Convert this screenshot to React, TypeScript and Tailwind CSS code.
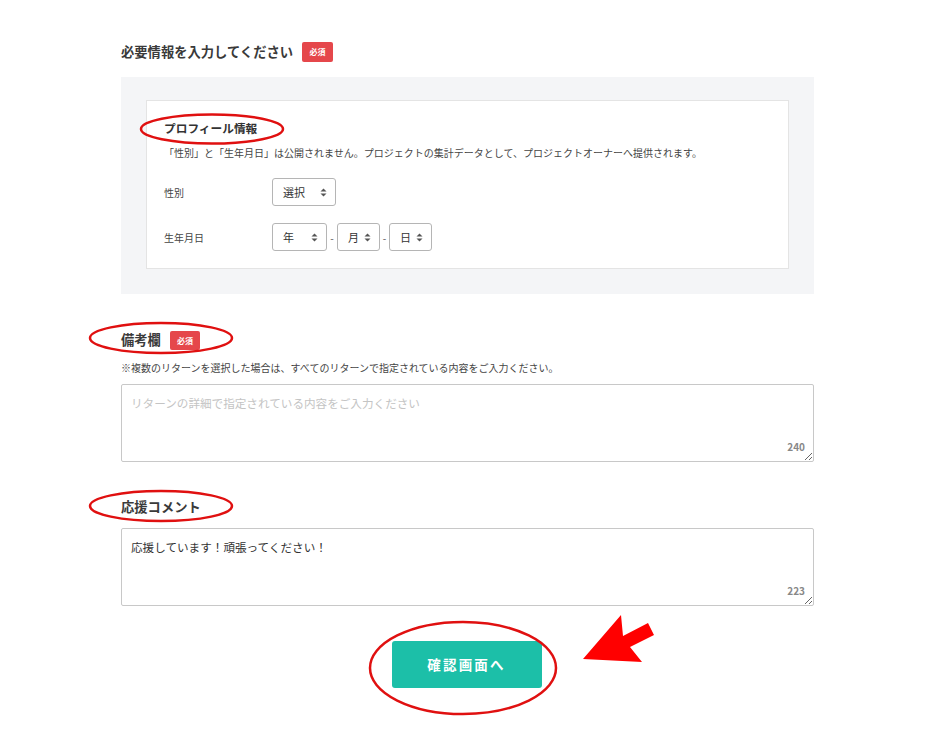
import { ReactNode } from "react";

const font = { fontFamily: '"Noto Sans CJK JP", "Noto Sans", sans-serif' };

function Badge() {
  return (
    <span className="inline-flex h-[20px] w-[31px] items-center justify-center rounded-[2px] bg-[#e5474b] text-[8px] font-bold text-white">
      必須
    </span>
  );
}

function Caret() {
  return (
    <svg width="7" height="9" viewBox="0 0 7 9" className="shrink-0">
      <path d="M3.5 0.5 L6.5 3.5 H0.5 Z" fill="#555" />
      <path d="M3.5 8.5 L6.5 5.5 H0.5 Z" fill="#555" />
    </svg>
  );
}

function FakeSelect({ label, width }: { label: string; width: string }) {
  return (
    <div
      className={`flex h-[28px] ${width} items-center justify-between rounded-[3px] border border-[#b5b5b5] bg-white pl-[10px] pr-[8px] text-[11px] text-[#333]`}
    >
      <span>{label}</span>
      <Caret />
    </div>
  );
}

function Row({ label, children }: { label: string; children: ReactNode }) {
  return (
    <div className="flex items-center">
      <div className="w-[108px] text-[10px] text-[#444]">{label}</div>
      {children}
    </div>
  );
}

function TextBox({ placeholder, value, count }: { placeholder?: string; value?: string; count: number }) {
  return (
    <div className="relative">
      <textarea
        readOnly
        defaultValue={value}
        placeholder={placeholder}
        className="block h-[78px] w-full resize rounded-[2px] border border-[#c8c8c8] bg-white px-[9px] pt-[10px] text-[11.6px] text-[#333] placeholder:text-[#c4c4c4] outline-none"
        style={font}
      />
      <span className="absolute right-[9px] bottom-[8px] text-[10px] font-semibold text-[#888]">{count}</span>
    </div>
  );
}

export default function App() {
  return (
    <div className="relative min-h-[735px] w-full bg-white text-[#333]" style={font}>
      <div className="ml-[121px] w-[693px] pt-[42px]">
        <div className="flex h-[20px] items-center gap-[9px]">
          <h2 className="text-[13.3px] font-bold text-[#3a3a3a]">必要情報を入力してください</h2>
          <Badge />
        </div>

        <div className="mt-[15px] bg-[#f4f5f7] px-[25px] pt-[23px] pb-[25px]">
          <div className="h-[169px] border border-[#e4e4e4] bg-white pl-[17px] pt-[18px]">
            <h3 className="text-[11.7px] leading-[18px] font-bold text-[#333]">プロフィール情報</h3>
            <p className="mt-[9px] text-[10px] leading-[14px] text-[#444]">
              「性別」と「生年月日」は公開されません。プロジェクトの集計データとして、プロジェクトオーナーへ提供されます。
            </p>
            <div className="mt-[18px] flex flex-col gap-[17px]">
              <Row label="性別">
                <FakeSelect label="選択" width="w-[64px]" />
              </Row>
              <Row label="生年月日">
                <div className="flex items-center">
                  <FakeSelect label="年" width="w-[55px]" />
                  <span className="w-[10px] text-center text-[10px] text-[#555]">-</span>
                  <FakeSelect label="月" width="w-[43px]" />
                  <span className="w-[9px] text-center text-[10px] text-[#555]">-</span>
                  <FakeSelect label="日" width="w-[43px]" />
                </div>
              </Row>
            </div>
          </div>
        </div>

        <div className="mt-[37px] flex h-[19px] items-center gap-[9px]">
          <h2 className="mt-[-2px] text-[13.3px] font-bold text-[#3a3a3a]">備考欄</h2>
          <span className="inline-flex h-[19px] w-[30px] items-center justify-center rounded-[2px] bg-[#e5474b] text-[8px] font-bold text-white">
            必須
          </span>
        </div>
        <p className="mt-[12px] text-[10px] leading-[12px] text-[#444]">
          ※複数のリターンを選択した場合は、すべてのリターンで指定されている内容をご入力ください。
        </p>
        <div className="mt-[10px]">
          <TextBox placeholder="リターンの詳細で指定されている内容をご入力ください" count={240} />
        </div>

        <h2 className="mt-[35px] text-[13.3px] leading-[20px] font-bold text-[#3a3a3a]">応援コメント</h2>
        <div className="mt-[11px]">
          <TextBox value="応援しています！頑張ってください！" count={223} />
        </div>

        <div className="mt-[35px] flex justify-center">
          <button className="ml-[-2px] h-[47px] w-[150px] rounded-[3px] bg-[#1cbfa8] text-[13.5px] font-bold tracking-[0.16em] text-white">
            確認画面へ
          </button>
        </div>
      </div>

      <svg className="pointer-events-none absolute inset-0" width="932" height="735" viewBox="0 0 932 735">
        <g fill="none" stroke="#e01010" strokeWidth="2.5">
          <ellipse cx="212" cy="129" rx="71" ry="14.5" />
          <ellipse cx="161" cy="338" rx="71" ry="15" />
          <ellipse cx="161" cy="506" rx="71" ry="15" />
          <ellipse cx="463" cy="668" rx="93" ry="46" />
        </g>
        <polygon
          points="583,659 621,615 623,636 648,623 654,635 630,647 642,662"
          fill="#ff0000"
        />
      </svg>
    </div>
  );
}
